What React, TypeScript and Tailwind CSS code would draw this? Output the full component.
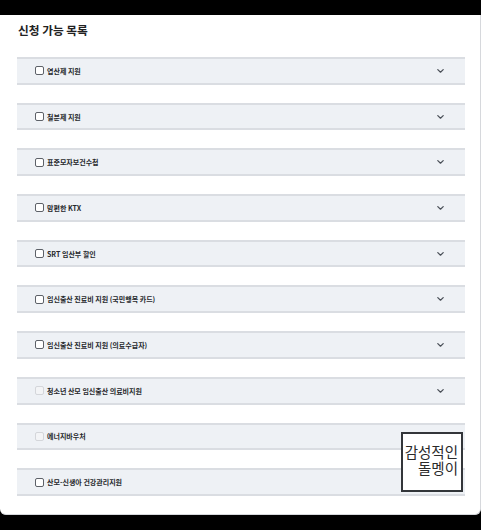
import React from "react";

const items: { label: string; disabled?: boolean }[] = [
  { label: "엽산제 지원" },
  { label: "철분제 지원" },
  { label: "표준모자보건수첩" },
  { label: "맘편한 KTX" },
  { label: "SRT 임산부 할인" },
  { label: "임신출산 진료비 지원 (국민행복 카드)" },
  { label: "임신출산 진료비 지원 (의료수급자)" },
  { label: "청소년 산모 임신출산 의료비지원", disabled: true },
  { label: "에너지바우처", disabled: true },
  { label: "산모-신생아 건강관리지원" },
];

function Chevron() {
  return (
    <svg width="7" height="4" viewBox="0 0 7 4" fill="none">
      <polyline points="0.8,0.6 3.5,3.2 6.2,0.6" stroke="#4a4f57" strokeWidth="1.2" strokeLinecap="round" strokeLinejoin="round" />
    </svg>
  );
}

export default function App() {
  return (
    <div
      className="relative w-[481px] h-[530px] bg-black flex flex-col pt-[15px] overflow-hidden"
      style={{ fontFamily: '"Noto Sans CJK KR", "Noto Sans", sans-serif' }}
    >
      <div className="bg-white h-[500px] rounded-b-[6px] border-r border-b border-[#d6d8dc] pl-[17px] pr-[15px] pt-[7px] flex flex-col">
        <div className="text-[11.7px] leading-[16px] font-bold text-[#222] pl-[1px]">신청 가능 목록</div>
        <div className="mt-[19px] flex flex-col gap-[18px]">
          {items.map((it) => (
            <div
              key={it.label}
              className="h-[27.7px] bg-[#eef1f5] border-y-2 border-[#dadde2] flex items-center pl-[18px] pr-[21px]"
            >
              <span
                className={
                  "w-[9px] h-[9px] rounded-[2px] border " +
                  (it.disabled ? "border-[#d4d6da] bg-[#f3f4f6]" : "border-[#5d6168] bg-white")
                }
              />
              <span className="ml-[3px] text-[7px] leading-[10px] font-bold text-[#26282c] flex-1">
                {it.label}
              </span>
              <Chevron />
            </div>
          ))}
        </div>
      </div>
      <div className="absolute left-[401px] top-[432px] w-[62px] h-[60px] border-2 border-[#33363a] bg-white flex flex-col items-end justify-center pr-[3px] pb-[5px] text-[14.5px] leading-[16px] text-[#2a2a2a]">
        <span>감성적인</span>
        <span>돌멩이</span>
      </div>
    </div>
  );
}
